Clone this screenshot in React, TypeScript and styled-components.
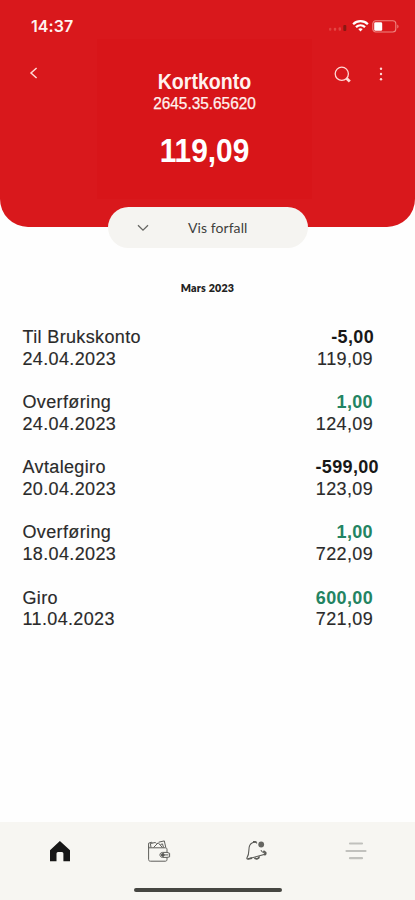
import React from 'react';
import styled, { createGlobalStyle } from 'styled-components';

const GlobalStyle = createGlobalStyle`
  * { box-sizing: border-box; }
  body { margin: 0; background: #fff; font-family: "Liberation Sans", Arial, sans-serif; }
`;

const Screen = styled.div`
  width: 415px;
  height: 900px;
  overflow: hidden;
  display: flex;
  flex-direction: column;
  background: #fefefe;
`;

const Header = styled.header`
  height: 227px;
  flex: none;
  background: linear-gradient(#d81519, #d81519) 97px 39px / 215px 160px no-repeat, #d9181c;
  border-radius: 0 0 28px 28px;
  color: #fff2ef;
  display: flex;
  flex-direction: column;
`;

const StatusBar = styled.div`
  height: 52px;
  padding: 0 15px 0 31px;
  display: flex;
  align-items: center;
  justify-content: space-between;
`;

const Clock = styled.span`
  font: 600 16px/20px Inter, sans-serif;
  letter-spacing: 0.1px;
`;

const StatusIcons = styled.div`
  display: flex;
  align-items: center;
  gap: 3px;
`;

const TopRow = styled.div`
  display: grid;
  grid-template-columns: 90px 1fr 90px;
  height: 175px;
`;

const IconButton = styled.button`
  border: 0;
  padding: 0;
  background: none;
  color: inherit;
  display: flex;
`;

const BackArea = styled.div`
  padding: 14px 0 0 28px;
`;

const Actions = styled.div`
  display: flex;
  align-items: flex-start;
  gap: 25px;
  padding: 13px 0 0 8px;
`;

const Account = styled.div`
  text-align: center;
  padding-top: 18px;
  margin-right: 6px;
`;

const AccountLine = styled.div<{ $size: number; $line: number; $stretch: number; $bold?: boolean }>`
  font-size: ${(p) => p.$size}px;
  line-height: ${(p) => p.$line}px;
  font-weight: ${(p) => (p.$bold ? 700 : 400)};
  -webkit-text-stroke: ${(p) => (p.$bold ? 0 : 0.25)}px currentColor;
  transform: scaleX(${(p) => p.$stretch});
`;

const Balance = styled(AccountLine)`
  margin-top: 20px;
  color: #fff;
`;

const DuePill = styled.button`
  width: 200px;
  height: 41px;
  flex: none;
  margin: -20px 0 0 108px;
  padding: 0 0 0 28px;
  border: 0;
  border-radius: 21px;
  background: #f5f4f1;
  color: #3f3f3d;
  display: flex;
  align-items: center;
  gap: 38px;
  font: 400 14px/18px Lato, sans-serif;
  letter-spacing: 0.07px;
`;

const Month = styled.h2`
  margin: 33px 0 0;
  font: 800 10.7px/14px Lato, sans-serif;
  text-align: center;
  color: #222;
  letter-spacing: 0.18px;
`;

const List = styled.ul`
  list-style: none;
  margin: 31.8px 0 0;
  padding: 0 0 0 22.5px;
  display: flex;
  flex-direction: column;
  gap: 21.7px;
  flex: 1;
`;

const Item = styled.li`
  display: flex;
  justify-content: space-between;
  font-size: 18px;
  line-height: 21.75px;
  letter-spacing: 0.36px;
  color: #2a2a2a;
`;

const Column = styled.div<{ $end?: boolean }>`
  display: flex;
  flex-direction: column;
  align-items: ${(p) => (p.$end ? 'flex-end' : 'flex-start')};
  padding-right: ${(p) => (p.$end ? 42 : 0)}px;
  -webkit-text-stroke: 0.15px currentColor;
`;

const Amount = styled.span<{ $income: boolean; $outset: number }>`
  font-weight: 700;
  -webkit-text-stroke: 0;
  color: ${(p) => (p.$income ? '#238462' : '#181818')};
  margin-right: ${(p) => -p.$outset}px;
`;

const Nav = styled.nav`
  height: 78px;
  flex: none;
  background: #f7f6f2;
  display: flex;
  flex-direction: column;
  align-items: center;
`;

const Tabs = styled.div`
  display: grid;
  grid-template-columns: repeat(4, 98.8px);
  height: 65px;
  width: 100%;
  padding: 17px 0 0 10.5px;
  justify-items: center;
  align-items: start;
`;

const HomeIndicator = styled.div`
  width: 148px;
  height: 4px;
  margin-top: 1px;
  border-radius: 2px;
  background: #464642;
`;

const entries = [
  { name: 'Til Brukskonto', date: '24.04.2023', amount: '-5,00', balance: '119,09', outset: 1 },
  { name: 'Overføring', date: '24.04.2023', amount: '1,00', balance: '124,09', outset: 0 },
  { name: 'Avtalegiro', date: '20.04.2023', amount: '-599,00', balance: '123,09', outset: 6 },
  { name: 'Overføring', date: '18.04.2023', amount: '1,00', balance: '722,09', outset: 0 },
  { name: 'Giro', date: '11.04.2023', amount: '600,00', balance: '721,09', outset: 0 },
];

const Signal = () => (
  <svg width="20" height="10" viewBox="0 0 20 10">
    <g fill="#ec6f69">
      <rect x="0" y="6.8" width="2.4" height="3" rx="1" opacity=".45" />
      <rect x="4.8" y="6.8" width="2.4" height="3" rx="1" opacity=".55" />
      <rect x="9.6" y="6.3" width="2.4" height="3.5" rx="1" opacity=".5" />
    </g>
    <rect x="14.3" y="4" width="3" height="6" rx="1" fill="#8a1813" />
  </svg>
);

const Wifi = () => (
  <svg width="17" height="14" viewBox="0 0 18 14" fill="none" stroke="#fff" strokeWidth="2.4">
    <path d="M1.2 5.1C5.6.9 12.4.9 16.8 5.1" />
    <path d="M4.2 8.2c2.8-2.6 6.8-2.6 9.6 0" />
    <path d="M9 12.8 6.6 10.3c1.3-1.2 3.5-1.2 4.8 0z" fill="#fff" stroke="none" />
  </svg>
);

const Battery = () => (
  <svg width="28" height="13" viewBox="0 0 28 13">
    <rect x=".8" y=".8" width="23" height="11.2" rx="3" fill="none" stroke="#ef8580" strokeWidth="1.1" />
    <rect x="2.2" y="2.2" width="8" height="8.6" rx="1.3" fill="#fff" />
    <path d="M25.3 4.5c1.6.6 1.6 3.4 0 4z" fill="#ef8580" />
  </svg>
);

const Back = () => (
  <svg width="12" height="14" viewBox="0 0 12 14">
    <path d="M8.6 2 3 7l5.6 5" fill="none" stroke="#ffdad6" strokeWidth="1.5" />
  </svg>
);

const Search = () => (
  <svg width="20" height="20" viewBox="0 0 20 20" fill="none" stroke="#ffd9d5">
    <circle cx="8.8" cy="8.8" r="6.6" strokeWidth="1.3" />
    <path d="m13.4 13.3 3.4 3.3" strokeWidth="2.8" />
  </svg>
);

const More = () => (
  <svg width="6" height="18" viewBox="0 0 6 18" fill="#ffdad6">
    <circle cx="3" cy="3.8" r="1.2" />
    <circle cx="3" cy="9" r="1.2" />
    <circle cx="3" cy="14.2" r="1.2" />
  </svg>
);

const Chevron = () => (
  <svg width="14" height="10" viewBox="0 0 14 10">
    <path d="m2 2.2 5 5 5-5" fill="none" stroke="#666663" strokeWidth="1.3" />
  </svg>
);

const Home = () => (
  <svg width="24" height="24" viewBox="0 0 24 24">
    <path d="M2 11.2 11.9 2l10.1 9.2v11h-6.6v-7.6a1.5 1.5 0 0 0-1.5-1.5H10a1.5 1.5 0 0 0-1.5 1.5v7.6H2z" fill="#171717" />
  </svg>
);

const Wallet = () => (
  <svg width="24" height="24" viewBox="0 0 24 24" fill="none" stroke="#5e5e5b" strokeWidth="1">
    <path d="M1.6 6.8v13.6c0 1.2.6 1.8 1.8 1.8h15c1 0 1.6-.6 1.6-1.8v-2M1.6 8.8h16.8c1 0 1.6.7 1.6 1.6v3" />
    <path d="M1.6 8.6V4.2l3.1-1 .7 1M4 8.6l-.6-4.1 4.8-1 1.4 1M6.5 8.5l4.7-4.7 4.2 4.7M11.7 3.2l5.6-1.3 1.5 6.7M13.5 5.5l2-.6 1 3.5" />
    <path d="m20 13.4 2.6.9v3.6l-2.6.5h-4.5c-3.4 0-3.4-5 0-5z" />
    <circle cx="15.8" cy="15.9" r="1.5" fill="#555552" />
    <path d="M17.4 15.9h4" />
  </svg>
);

const Bell = () => (
  <svg width="24" height="24" viewBox="0 0 24 24" fill="none" stroke="#5b5b57" strokeWidth="1.1">
    <path d="m12 4.3-1.5-1.5-3 1c-2.7 1.1-3.6 4-3.6 7.2 0 3.1-.4 5.4-2.1 8.2l.5.9 17.5-4.7-.1-1.1c-2.1-.7-3.1-1.6-3.8-3.2" />
    <path d="M8 2.8 11.5 3M3 20l4-.9M9.6 18.7c1.2 2 4.7 1.1 4.5-1.3M18.4 11.8l2.2 1.8c.4 1.2-.1 2-1.3 2.4" strokeWidth="1.7" />
    <circle cx="16.2" cy="5.5" r="2.9" fill="#666662" stroke="none" />
  </svg>
);

const Menu = () => (
  <svg width="24" height="24" viewBox="0 0 24 24" stroke="#c1c1bd" strokeWidth="2.2" strokeLinecap="round">
    <path d="M6 4.5h12M2.5 12h19M6 19.2h12" />
  </svg>
);

export default function App() {
  return (
    <>
      <GlobalStyle />
      <Screen>
        <Header>
          <StatusBar>
            <Clock>14:37</Clock>
            <StatusIcons><Signal /><Wifi /><Battery /></StatusIcons>
          </StatusBar>
          <TopRow>
            <BackArea><IconButton aria-label="Tilbake"><Back /></IconButton></BackArea>
            <Account>
              <AccountLine $size={22} $line={24} $stretch={0.89} $bold>Kortkonto</AccountLine>
              <AccountLine $size={16.2} $line={19} $stretch={0.95}>2645.35.65620</AccountLine>
              <Balance $size={33} $line={36} $stretch={0.905} $bold>119,09</Balance>
            </Account>
            <Actions>
              <IconButton aria-label="Søk"><Search /></IconButton>
              <IconButton aria-label="Mer"><More /></IconButton>
            </Actions>
          </TopRow>
        </Header>
        <DuePill><Chevron />Vis forfall</DuePill>
        <Month>Mars 2023</Month>
        <List>
          {entries.map((e, i) => (
            <Item key={i}>
              <Column>
                <span>{e.name}</span>
                <span>{e.date}</span>
              </Column>
              <Column $end>
                <Amount $income={!e.amount.startsWith('-')} $outset={e.outset}>{e.amount}</Amount>
                <span>{e.balance}</span>
              </Column>
            </Item>
          ))}
        </List>
        <Nav>
          <Tabs>
            <IconButton aria-label="Hjem"><Home /></IconButton>
            <IconButton aria-label="Lommebok"><Wallet /></IconButton>
            <IconButton aria-label="Varsler"><Bell /></IconButton>
            <IconButton aria-label="Meny"><Menu /></IconButton>
          </Tabs>
          <HomeIndicator />
        </Nav>
      </Screen>
    </>
  );
}
